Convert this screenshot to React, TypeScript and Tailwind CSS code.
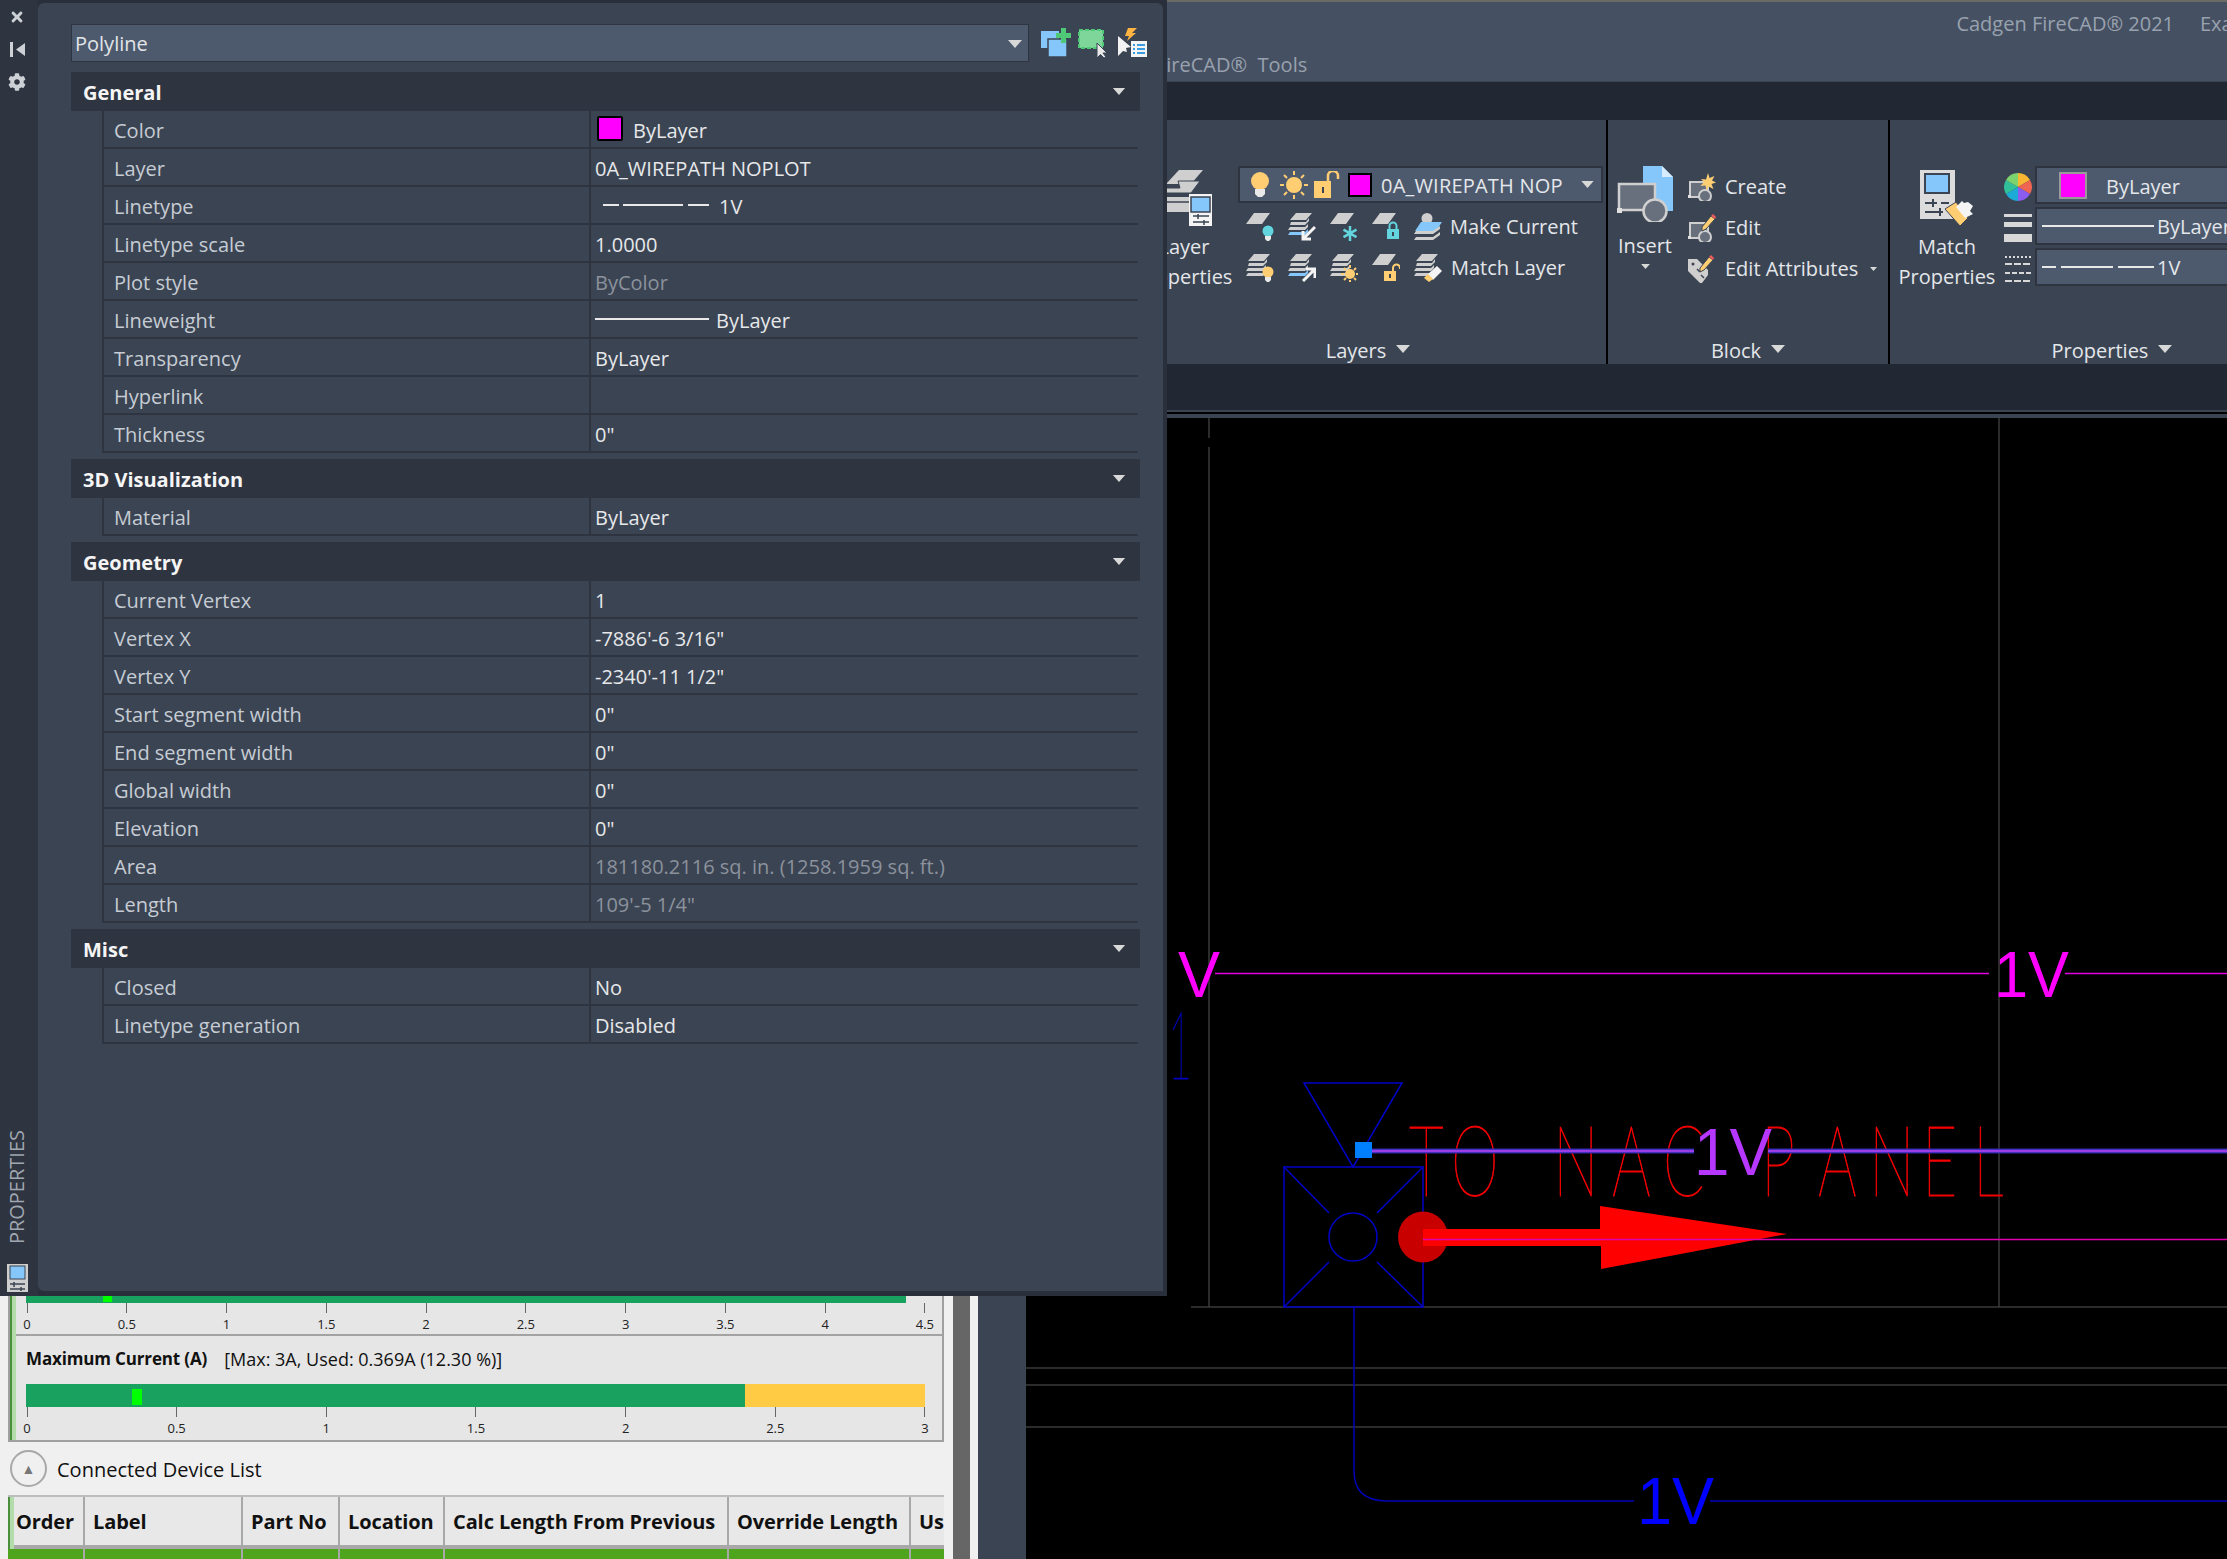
import type { ReactNode } from 'react';
import { FaCog, FaTimes } from 'react-icons/fa';

type Prop = { label: string; value?: ReactNode; muted?: boolean };
type Section = { title: string; rows: Prop[] };

const Swatch = ({ className = '' }: { className?: string }) => (
    <span className={`block bg-[#ff00ff] border-[2px] ${className}`} />
);

const DashLine = () => (
    <span className="flex items-center w-[114px] h-[3px] pl-[8px] -mt-[4px]">
        <span className="h-[2px] w-[16px] bg-[#e8e8e8]" />
        <span className="h-[2px] w-[60px] ml-[4px] bg-[#e8e8e8]" />
        <span className="h-[2px] w-[21px] ml-[5px] bg-[#e8e8e8]" />
    </span>
);

const sections: Section[] = [
    {
        title: 'General',
        rows: [
            {
                label: 'Color',
                value: (
                    <span className="flex items-center gap-[10px] ml-[2px]">
                        <Swatch className="w-[26px] h-[25px] -mt-[5px] border-black rounded-[2px]" />
                        ByLayer
                    </span>
                ),
            },
            { label: 'Layer', value: '0A_WIREPATH NOPLOT' },
            {
                label: 'Linetype',
                value: (
                    <span className="flex items-center gap-[10px]">
                        <DashLine />
                        1V
                    </span>
                ),
            },
            { label: 'Linetype scale', value: '1.0000' },
            { label: 'Plot style', value: 'ByColor', muted: true },
            {
                label: 'Lineweight',
                value: (
                    <span className="flex items-center gap-[7px]">
                        <span className="block w-[114px] h-[2px] -mt-[4px] bg-[#e8e8e8]" />
                        ByLayer
                    </span>
                ),
            },
            { label: 'Transparency', value: 'ByLayer' },
            { label: 'Hyperlink', value: '' },
            { label: 'Thickness', value: '0"' },
        ],
    },
    { title: '3D Visualization', rows: [{ label: 'Material', value: 'ByLayer' }] },
    {
        title: 'Geometry',
        rows: [
            { label: 'Current Vertex', value: '1' },
            { label: 'Vertex X', value: "-7886'-6 3/16\"" },
            { label: 'Vertex Y', value: "-2340'-11 1/2\"" },
            { label: 'Start segment width', value: '0"' },
            { label: 'End segment width', value: '0"' },
            { label: 'Global width', value: '0"' },
            { label: 'Elevation', value: '0"' },
            { label: 'Area', value: '181180.2116 sq. in. (1258.1959 sq. ft.)', muted: true },
            { label: 'Length', value: "109'-5 1/4\"", muted: true },
        ],
    },
    {
        title: 'Misc',
        rows: [
            { label: 'Closed', value: 'No' },
            { label: 'Linetype generation', value: 'Disabled' },
        ],
    },
];

const Caret = ({ className = '' }: { className?: string }) => (
    <svg viewBox="0 0 14 8" className={`block fill-[#d8d8d8] ${className}`}>
        <path d="M0 0h14L7 8z" />
    </svg>
);

const Icon = ({ size = 28, h, children }: { size?: number; h?: number; children: ReactNode }) => (
    <svg
        viewBox={`0 0 ${size} ${h ?? size}`}
        width={size}
        height={h ?? size}
        className="block shrink-0"
    >
        {children}
    </svg>
);

const Plate = ({ y = 0 }: { y?: number }) => <path d={`M8 ${y}h16l-8 11H0z`} fill="#cfcfcf" />;

const Stack = () => (
    <>
        <path d="M8 0h16l-6 7H2z" fill="#cfcfcf" />
        <path d="M3 9h15l3-4v3l-4 4H2z" fill="#cfcfcf" />
        <path d="M2 14h15l3-3v3l-3 3H0z" fill="#cfcfcf" />
        <path d="M2 19h15l3-3v3l-3 3H0z" fill="#cfcfcf" />
    </>
);

const BlueStack = () => (
    <>
        <path d="M8 0h16l-6 7H2z" fill="#cfcfcf" />
        <path d="M3 9h15l3-4v3l-4 4H2z" fill="#cfcfcf" />
        <path d="M2 14h15l3-3v3l-3 3H0z" fill="#cfcfcf" />
        <path d="M2 19h15l3-3v3l-3 3H0z" fill="#85c7fb" />
    </>
);

const Bulb = ({ c, x = 19, y = 14 }: { c: string; x?: number; y?: number }) => (
    <g>
        <circle cx={x} cy={y + 5} r="5.5" fill={c} />
        <path d={`M${x - 3} ${y + 10}h6v3l-2 2h-2l-2-2z`} fill="#eaeaea" />
    </g>
);

const Lock = ({ c, open, x = 14, y = 12 }: { c: string; open?: boolean; x?: number; y?: number }) => (
    <g>
        <rect x={x} y={y + 6} width="12" height="10" fill={c} />
        <path
            d={open ? `M${x + 9} ${y + 6}v-3a3.5 3.5 0 0 1 7 0v1` : `M${x + 2.5} ${y + 6}v-3a3.5 3.5 0 0 1 7 0v3`}
            fill="none"
            stroke={c}
            strokeWidth="2"
        />
        <rect x={x + 5} y={y + 9} width="2" height="4" fill="#3b4453" />
    </g>
);

const layerIconsTop = [
    <Icon key="a"><Plate /><Bulb c="#62d5de" x={22} y={13} /></Icon>,
    <Icon key="b">
        <BlueStack />
        <path d="M27 14L16 25M15 18v8h8" fill="none" stroke="#f4f4f4" strokeWidth="3" />
    </Icon>,
    <Icon key="c">
        <Plate />
        <g stroke="#62d5de" strokeWidth="2.500" fill="none">
            <path d="M20 13v15M13.500 16.700l13 7.500M13.500 24.200l13-7.500" />
        </g>
    </Icon>,
    <Icon key="d"><Plate /><Lock c="#62d5de" x={15} y={10} /></Icon>,
    <Icon key="e">
        <circle cx="13" cy="5.5" r="5.5" fill="#cfcfcf" />
        <path d="M7 9h21l-6 9H1z" fill="#85c7fb" />
        <path d="M2 18h17l7-5v3l-7 5H0z" fill="#cfcfcf" />
        <path d="M2 24h17l7-5v3l-7 5H0z" fill="#cfcfcf" />
    </Icon>,
];

const layerIconsBottom = [
    <Icon key="a"><Stack /><Bulb c="#ffce73" x={22} y={13} /></Icon>,
    <Icon key="b">
        <BlueStack />
        <path d="M15 27L26 16M18 15h9v9" fill="none" stroke="#f4f4f4" strokeWidth="3" />
    </Icon>,
    <Icon key="c">
        <Stack />
        <circle cx="20" cy="20" r="5" fill="#ffce73" />
        <path d="M20 11v3M20 26v3M11 20h3M26 20h3M14 14l2 2M24 24l2 2M14 26l2-2M24 16l2-2" stroke="#ffce73" strokeWidth="2" />
    </Icon>,
    <Icon key="d"><Plate /><Lock c="#ffce73" open x={12} y={11} /></Icon>,
    <Icon key="e">
        <Stack />
        <path d="M14 20l9-8 5 5-9 9z" fill="#f4f4f4" />
        <path d="M14 20l5 5-4 3-5-4z" fill="#ffce73" />
    </Icon>,
];

const InsertIcon = () => (
    <Icon size={56}>
        <path d="M26 0h19l11 11v34H26z" fill="#85c7fb" />
        <path d="M45 0l11 11H45z" fill="#d9ecfb" />
        <rect x="2" y="18" width="36" height="26" fill="#68707e" stroke="#cfcfcf" strokeWidth="2.5" />
        <rect x="0" y="42" width="5" height="5" fill="#e0e0e0" />
        <circle cx="38" cy="45" r="11.5" fill="#68707e" stroke="#cfcfcf" strokeWidth="2.5" />
    </Icon>
);

const BlockBase = () => (
    <>
        <rect x="2" y="9" width="18" height="15" fill="#68707e" stroke="#cfcfcf" strokeWidth="2" />
        <circle cx="17" cy="23" r="6" fill="#68707e" stroke="#cfcfcf" strokeWidth="2" />
        <rect x="0" y="22" width="3" height="3" fill="#e0e0e0" />
    </>
);

const Pencil = ({ x = 0, y = 0 }: { x?: number; y?: number }) => (
    <g transform={`translate(${x} ${y})`}>
        <path d="M0 13L9 2l4 3-9 10-4 2z" fill="#ffce73" stroke="#3b4453" />
        <path d="M9 2l2-2 3 3-1 2z" fill="#ef5b5b" />
    </g>
);

const blockRows: { label: string; icon: ReactNode; caret?: boolean }[] = [
    {
        label: 'Create',
        icon: (
            <Icon>
                <BlockBase />
                <path d="M20 0l1.5 5 5-2-2.500 4.500 4 2-4.500 1.500 2 5-5-2.500-2 4-1-5-5 .5 3.500-4-3-3 5 .5z" fill="#ffce73" />
            </Icon>
        ),
    },
    {
        label: 'Edit',
        icon: (
            <Icon>
                <BlockBase />
                <Pencil x={14} y={0} />
            </Icon>
        ),
    },
    {
        label: 'Edit Attributes',
        caret: true,
        icon: (
            <Icon>
                <path d="M0 4h9l11 11v5l-6 8h-2L0 16z" fill="#cfcfcf" />
                <circle cx="5" cy="9" r="1.500" fill="#3b4453" />
                <path d="M9 14l3 3M13 20l3 3" stroke="#3b4453" strokeWidth="1.500" />
                <Pencil x={12} y={0} />
            </Icon>
        ),
    },
];

const TopButtons = () => (
    <div className="flex items-center gap-[7px] ml-[12px]">
        <Icon size={30} h={30}>
            <rect x="0" y="3" width="18" height="17" fill="#85c7fb" />
            <rect x="7" y="11" width="19" height="18" fill="#85c7fb" stroke="#3b4453" strokeWidth="1.500" />
            <path d="M20 0h5v5h5v5h-5v5h-5v-5h-5V5h5z" fill="#4fc878" />
        </Icon>
        <Icon size={30} h={30}>
            <rect x="1" y="2" width="24" height="18" fill="#7fd69a" stroke="#4fc878" strokeWidth="2" strokeDasharray="4 2" />
            <path d="M19 15v15l3.500-3.500L26 30l2-1-3-4h4z" fill="#e8e8e8" stroke="#3b4453" />
        </Icon>
        <Icon size={32} h={30}>
            <path d="M13 0h9l-5 5h4L12 13l2-5h-4z" fill="#ffb340" />
            <path d="M3 8v20l5-5 4 1-1-4 5-1z" fill="#f2f2f2" />
            <rect x="16" y="13" width="16" height="16" fill="#f4f4f4" />
            <path d="M22 17h8M22 21h8M22 25h8M18 17h2M18 21h2M18 25h2" stroke="#3b9ce0" strokeWidth="2" />
        </Icon>
    </div>
);

const PropertyPalette = () => (
    <div className="absolute left-0 top-0 w-[1167px] h-[1296px] flex bg-[#2a303b]">
        <div className="w-[38px] shrink-0 flex flex-col items-center bg-[#2e3440]">
            <FaTimes className="mt-[9px] -ml-[4px] text-[16px] text-[#cdd1d6]" />
            <svg viewBox="0 0 15 15" className="w-[15px] h-[15px] mt-[17px] -ml-[4px] fill-[#cdd1d6]">
                <path d="M0 0h3v15H0zM15 1v13L6 7.500z" />
            </svg>
            <FaCog className="mt-[16px] -ml-[4px] text-[18px] text-[#cdd1d6]" />
            <span className="mt-auto [writing-mode:vertical-rl] rotate-180 text-[20px] leading-[20px] -ml-[4px] text-[#a0a7b0]">
                PROPERTIES
            </span>
            <svg viewBox="0 0 21 28" className="w-[21px] h-[28px] mt-[20px] mb-[4px] -ml-[4px]">
                <rect width="21" height="28" fill="#cfcfcf" />
                <rect x="3" y="2" width="15" height="13" fill="#85c7fb" stroke="#3b4453" />
                <path d="M3 20h15M3 25h15M7 18v5M14 23v4" stroke="#3b4453" strokeWidth="1.500" />
            </svg>
        </div>
        <div className="flex-1 min-w-0 rounded-t-[6px] rounded-bl-[6px] mt-[3px] mr-[4px] mb-[5px] bg-[#3b4453] pl-[33px] pr-[23px] pt-[21px]">
            <div className="flex items-center">
                <div className="flex items-center justify-between shrink-0 h-[38px] w-[958px] bg-[#4d5a6e] border border-[#2e3440] pl-[3px] pr-[5px] pt-[2px] text-[#e2e5e8]">
                    Polyline
                    <Caret className="w-[16px] h-[8px]" />
                </div>
                <TopButtons />
            </div>
            <div className="mt-[10px] flex flex-col gap-[6px]">
                {sections.map((section) => (
                    <div key={section.title}>
                        <div className="flex items-center justify-between h-[39px] bg-[#2e3440] pl-[12px] pr-[14px] font-bold text-[#f5f5f5]">
                            <span className="pt-[2px]">{section.title}</span>
                            <Caret className="w-[14px] h-[7px]" />
                        </div>
                        <div className="ml-[31px] mr-[2px]">
                            {section.rows.map((row) => (
                                <div key={row.label} className="flex h-[38px] border-b-[2px] border-[#2e3440]">
                                    <div className="w-[489px] border-l-[2px] border-r-[2px] border-[#2e3440] pl-[10px] pt-[4px] flex items-center text-[#c6ccd3]">
                                        {row.label}
                                    </div>
                                    <div
                                        className={`flex-1 pl-[4px] pt-[4px] flex items-center ${row.muted ? 'text-[#8b929c]' : 'text-[#e6e8ea]'}`}
                                    >
                                        {row.value}
                                    </div>
                                </div>
                            ))}
                        </div>
                    </div>
                ))}
            </div>
        </div>
    </div>
);

const PanelLabel = ({ children }: { children: string }) => (
    <div className="flex items-center justify-center gap-[10px] h-[26px] text-[#e4e7ea]">
        {children}
        <Caret className="w-[14px] h-[8px] mb-[4px]" />
    </div>
);

const Ribbon = () => (
    <div className="flex h-[244px] pl-[1130px] gap-[2px] text-[20px] leading-[26px] text-[#e4e7ea]">
        <section className="w-[476px] shrink-0 flex flex-col justify-between bg-[#3b4453] pt-[46px]">
            <div className="flex">
                <div className="w-[108px] flex flex-col items-center text-center leading-[30px]">
                    <div className="mt-[4px] ml-[10px] mb-[2px] h-[60px]">
                        <Icon size={46} h={56}>
                            <path d="M13 0h24L25 14H0z" fill="#cfcfcf" />
                            <path d="M12 11h22l-9 12H0v-5h14z" fill="#cfcfcf" stroke="#3b4453" />
                            <path d="M0 27h23v15H0z" fill="#cfcfcf" />
                            <path d="M0 32h23" stroke="#3b4453" strokeWidth="1.500" />
                            <rect x="23" y="24" width="23" height="32" fill="#f4f4f4" />
                            <rect x="25" y="27" width="19" height="15" fill="#85c7fb" stroke="#3b4453" strokeWidth="1.500" />
                            <path d="M27 46h16M27 52h16M32 44v5M38 50v5" stroke="#3b4453" strokeWidth="1.500" />
                        </Icon>
                    </div>
                    <span>Layer</span>
                    <span>Properties</span>
                </div>
                <div className="w-[365px]">
                    <div className="flex items-center h-[37px] bg-[#4d5a6e] border-[2px] border-[#2e3440] pl-[10px] pr-[4px]">
                        <Icon size={20} h={26}>
                            <circle cx="10" cy="9" r="9" fill="#ffce73" />
                            <path d="M5 17h10v5l-3 3H8l-3-3z" fill="#eaeaea" />
                        </Icon>
                        <div className="ml-[10px]">
                            <Icon size={28}>
                                <circle cx="14" cy="14" r="8" fill="#ffce73" />
                                <path d="M14 0v4M14 24v4M0 14h4M24 14h4M4 4l3 3M21 21l3 3M4 24l3-3M21 7l3-3" stroke="#ffce73" strokeWidth="2" />
                            </Icon>
                        </div>
                        <div className="ml-[6px]">
                            <Icon size={26} h={28}>
                                <rect x="0" y="10" width="17" height="17" fill="#ffce73" />
                                <path d="M14 10V5a5 5 0 0 1 10 0v3" fill="none" stroke="#ffce73" strokeWidth="2.500" />
                                <rect x="8" y="16" width="2" height="6" fill="#3b4453" />
                            </Icon>
                        </div>
                        <Swatch className="ml-[8px] w-[24px] h-[24px] border-black" />
                        <span className="ml-[9px] pt-[2px] tracking-[0.2px]">0A_WIREPATH NOP</span>
                        <Caret className="ml-auto mr-[3px] w-[13px] h-[7px]" />
                    </div>
                    <div className="mt-[10px] flex items-center gap-[14px] pl-[8px] h-[28px]">
                        {layerIconsTop}
                        <span className="-ml-[6px]">Make Current</span>
                    </div>
                    <div className="mt-[13px] flex items-center gap-[14px] pl-[8px] h-[28px]">
                        {layerIconsBottom}
                        <span className="-ml-[5px]">Match Layer</span>
                    </div>
                </div>
            </div>
            <PanelLabel>Layers</PanelLabel>
        </section>
        <section className="w-[280px] shrink-0 flex flex-col justify-between bg-[#3b4453] pt-[46px]">
            <div className="flex">
                <div className="w-[74px] flex flex-col items-center">
                    <InsertIcon />
                    <span className="mt-[11px]">Insert</span>
                    <Caret className="mt-[5px] w-[9px] h-[5px]" />
                </div>
                <div className="ml-[6px] flex flex-col">
                    {blockRows.map((row) => (
                        <div key={row.label} className="flex items-center gap-[9px] h-[41px]">
                            {row.icon}
                            {row.label}
                            {row.caret && <Caret className="ml-[3px] w-[7px] h-[4px]" />}
                        </div>
                    ))}
                </div>
            </div>
            <PanelLabel>Block</PanelLabel>
        </section>
        <section className="w-[444px] shrink-0 flex flex-col justify-between bg-[#3b4453] pt-[46px]">
            <div className="flex">
                <div className="w-[114px] flex flex-col items-center leading-[30px] pt-[4px]">
                    <Icon size={54} h={56}>
                        <rect x="0" y="0" width="35" height="49" fill="#dcdcdc" />
                        <rect x="5" y="4" width="24" height="19" fill="#85c7fb" stroke="#3b4453" strokeWidth="2" />
                        <path d="M5 33h12M21 33h8M5 42h18M13 29v8M20 38v8" stroke="#3b4453" strokeWidth="2" />
                        <path d="M25 39L36 32 48 48 40 56z" fill="#ffce73" stroke="#3b4453" />
                        <path d="M36 37l6-6 2 2 4-1 5 4-3 5 3 3-8 4z" fill="#f4f4f4" />
                    </Icon>
                    <span className="mt-[6px]">Match</span>
                    <span>Properties</span>
                </div>
                <div className="flex flex-col">
                    <div className="h-[41px] flex items-center">
                        <Icon size={28}>
                            <path d="M14 14L14 0a14 14 0 0 1 12 7z" fill="#f8b632" />
                            <path d="M14 14L26 7a14 14 0 0 1 0 14z" fill="#ee6552" />
                            <path d="M14 14L26 21a14 14 0 0 1-12 7z" fill="#8a5cf0" />
                            <path d="M14 14L14 28a14 14 0 0 1-12-7z" fill="#1cabd6" />
                            <path d="M14 14L2 21a14 14 0 0 1 0-14z" fill="#31c19a" />
                            <path d="M14 14L2 7a14 14 0 0 1 12-7z" fill="#7dd36e" />
                        </Icon>
                    </div>
                    <div className="h-[41px] flex items-center">
                        <Icon size={28}>
                            <rect y="0" width="28" height="3" fill="#d8d8d8" />
                            <rect y="8" width="28" height="5" fill="#d8d8d8" />
                            <rect y="20" width="28" height="8" fill="#d8d8d8" />
                        </Icon>
                    </div>
                    <div className="h-[41px] flex items-center">
                        <Icon size={28} h={26}>
                            <path d="M1 1h26" stroke="#d8d8d8" strokeWidth="2" strokeDasharray="2 2" />
                            <path d="M1 8h26" stroke="#d8d8d8" strokeWidth="2" strokeDasharray="7 2" />
                            <path d="M1 17h26" stroke="#d8d8d8" strokeWidth="2" strokeDasharray="5 2" />
                            <path d="M1 25h26" stroke="#d8d8d8" strokeWidth="2" strokeDasharray="7 2" />
                        </Icon>
                    </div>
                </div>
                <div className="ml-[3px] flex flex-1 flex-col gap-[3px]">
                    <div className="flex items-center h-[38px] bg-[#4d5a6e] border-[2px] border-[#2e3440] pl-[22px]">
                        <Swatch className="w-[28px] h-[27px] border-[#9a9a9a]" />
                        <span className="ml-[19px] pt-[3px]">ByLayer</span>
                    </div>
                    <div className="flex items-center gap-[3px] h-[38px] bg-[#4d5a6e] border-[2px] border-[#2e3440] pl-[5px]">
                        <span className="block w-[112px] h-[2px] bg-[#e8e8e8]" />
                        <span className="pt-[2px]">ByLayer</span>
                    </div>
                    <div className="flex items-center gap-[3px] h-[38px] bg-[#4d5a6e] border-[2px] border-[#2e3440] pl-[5px]">
                        <span className="flex items-center gap-[5px] w-[112px]">
                            <span className="h-[2px] w-[14px] bg-[#e8e8e8]" />
                            <span className="h-[2px] w-[52px] bg-[#e8e8e8]" />
                            <span className="h-[2px] w-[36px] bg-[#e8e8e8]" />
                        </span>
                        <span className="pt-[2px]">1V</span>
                    </div>
                </div>
            </div>
            <PanelLabel>Properties</PanelLabel>
        </section>
    </div>
);

const Ticks = ({ labels }: { labels: string[] }) => (
    <div className="flex justify-between w-[898px] ml-[17px] text-[13px] text-[#222]">
        {labels.map((label) => (
            <div key={label} className="w-0 flex flex-col items-center">
                <span className="block w-[1px] h-[10px] bg-[#666] shrink-0" />
                <span className="mt-[3px] whitespace-nowrap leading-[16px]">{label}</span>
            </div>
        ))}
    </div>
);

const deviceColumns = [
    { name: 'Order', w: 'w-[77px]' },
    { name: 'Label', w: 'w-[158px]' },
    { name: 'Part No', w: 'w-[97px]' },
    { name: 'Location', w: 'w-[105px]' },
    { name: 'Calc Length From Previous', w: 'w-[284px]' },
    { name: 'Override Length', w: 'w-[182px]' },
    { name: 'Us', w: 'flex-1' },
];

const DevicePane = () => (
    <div className="w-[1026px] h-[263px] flex text-[#111]">
        <div className="w-[953px] bg-[#f0f0f0] pl-[8px] pr-[9px]">
            <div className="relative border-x-[2px] border-b-[2px] border-[#a0a0a0] bg-[#e6e6e6]">
                <div className="absolute left-0 top-0 bottom-0 w-[6px] border-l-[2px] border-[#4a8f3c] bg-[#b4dcaa]" />
                <div className="h-[40px] border-b-[2px] border-[#a3a3a3]">
                    <div className="relative h-[7px] w-[880px] ml-[16px] bg-[#19a160]">
                        <span className="absolute left-[77px] top-0 w-[9px] h-[6px] bg-[#00ff00]" />
                    </div>
                    <Ticks labels={['0', '0.5', '1', '1.5', '2', '2.5', '3', '3.5', '4', '4.5']} />
                </div>
                <div className="mt-[11px] ml-[16px] flex items-center h-[24px] whitespace-nowrap">
                    <span className="text-[17px] font-bold tracking-[-0.15px]">Maximum Current (A)</span>
                    <span className="ml-[17px] text-[18px]">[Max: 3A, Used: 0.369A (12.30 %)]</span>
                </div>
                <div className="relative flex mt-[13px] ml-[16px] w-[899px] h-[23px]">
                    <div className="w-[719px] bg-[#19a160]" />
                    <div className="flex-1 bg-[#ffcb45]" />
                    <span className="absolute left-[106px] top-[5px] w-[10px] h-[16px] bg-[#00ff00]" />
                </div>
                <div className="pb-[4px]">
                    <Ticks labels={['0', '0.5', '1', '1.5', '2', '2.5', '3']} />
                </div>
            </div>
            <div className="flex items-center h-[53px] pl-[2px] text-[20px]">
                <span className="flex items-center justify-center w-[37px] h-[37px] rounded-full border-[2px] border-[#a8a8a8] text-[14px] text-[#777]">
                    ▲
                </span>
                <span className="ml-[10px] pt-[2px]">Connected Device List</span>
            </div>
            <div className="relative border-t-[2px] border-[#bdbdbd]">
                <div className="absolute left-0 top-0 w-[6px] h-[52px] border-l-[2px] border-[#4a8f3c] bg-[#b4dcaa]" />
                <div className="flex h-[52px] bg-[#e8e8e8] border-b-[4px] border-[#a8a8a8] text-[20px] font-bold tracking-[-0.1px]">
                    {deviceColumns.map((col) => (
                        <div
                            key={col.name}
                            className={`${col.w} flex items-center pl-[8px] pt-[2px] overflow-hidden whitespace-nowrap border-r-[2px] border-[#a8a8a8] last:border-r-0`}
                        >
                            {col.name}
                        </div>
                    ))}
                </div>
                <div className="flex h-[12px] bg-[#4fa41e]">
                    {deviceColumns.map((col) => (
                        <div key={col.name} className={`${col.w} border-r-[2px] border-[#a8a8a8] last:border-r-0`} />
                    ))}
                </div>
            </div>
        </div>
        <div className="w-[17px] bg-[#666666]" />
        <div className="w-[8px] bg-[#f0f0f0]" />
        <div className="flex-1 bg-[#3b4453]" />
    </div>
);

// per-glyph starts of the CAD label, measured off the drawing
const NARROW = 0.62;
const panelLabelXs = [1409, 1451, 1500, 1553, 1612, 1663, 1720, 1761, 1818, 1869, 1922, 1973]
    .map((x) => (x / NARROW).toFixed(1))
    .join(' ');

const Drawing = () => (
    <svg viewBox="1026 418 1201 1141" width="1201" height="1141" className="block shrink-0 bg-black font-['Liberation_Sans',sans-serif]">
        <g stroke="#3a3a3a" strokeWidth="1.500" fill="none">
            <path d="M1209 418V438M1209 447V1307M1999 418V1307M1191 1307H2227" />
            <path d="M1026 1368H2227M1026 1385H2227M1026 1427H2227" />
        </g>
        <path d="M1215 973.500H1989M2065 973.500H2227" stroke="#e000e0" strokeWidth="1.500" />
        <text x="1178" y="997" fontSize="65" textLength="42" lengthAdjust="spacingAndGlyphs" fill="#ff00ff">V</text>
        <text x="1994" y="997" fontSize="65" textLength="75" lengthAdjust="spacingAndGlyphs" fill="#ff00ff">1V</text>
        <text x="1168" y="1079" fontSize="95" fontWeight="100" textLength="24" lengthAdjust="spacingAndGlyphs" fill="#0000b0" stroke="#0000c0" strokeWidth="0.8" className="font-['Lato',sans-serif]">1</text>
        <text x={panelLabelXs} y="1196" transform={`scale(${NARROW} 1)`} fontSize="98" fontWeight="100" fill="#ff0000" stroke="#f00000" strokeWidth="1" className="font-['Lato',sans-serif]">TO NAC PANEL</text>
        <path d="M1372 1151H1694M1768 1151H2227" stroke="#2a2ab0" strokeWidth="5" />
        <path d="M1372 1151H1694M1768 1151H2227" stroke="#9a3fe8" strokeWidth="2.500" />
        <text x="1694" y="1175" fontSize="66" textLength="78" lengthAdjust="spacingAndGlyphs" fill="#b637ff">1V</text>
        <g stroke="#0000c8" strokeWidth="1.500" fill="none">
            <path d="M1304 1083H1402L1353 1167Z" />
            <rect x="1284" y="1167" width="139" height="140" />
            <circle cx="1353" cy="1237" r="24" />
            <path d="M1284 1167L1329 1213M1423 1167L1377 1213M1284 1307L1329 1262M1423 1307L1377 1262" />
        </g>
        <rect x="1355" y="1142" width="17" height="16" fill="#0080ff" />
        <ellipse cx="1423" cy="1237" rx="25" ry="25.500" fill="#c80000" />
        <path d="M1423 1229H1600V1206L1787 1234L1601 1269V1246H1423Z" fill="#ff0000" />
        <path d="M1423 1239.500H2227" stroke="#e000b0" strokeWidth="1.500" />
        <path d="M1354 1307V1471Q1354 1501 1387 1501H1634M1710 1501H2227" stroke="#0000b8" strokeWidth="1.500" fill="none" />
        <text x="1637" y="1524" fontSize="66" textLength="77" lengthAdjust="spacingAndGlyphs" fill="#0000ff">1V</text>
    </svg>
);

export default function App() {
    return (
        <div className="relative w-[2227px] h-[1559px] overflow-hidden flex flex-col bg-black font-['Open_Sans',sans-serif] text-[20px]">
            <header className="h-[82px] shrink-0 bg-[#465063] border-t-[2px] border-[#6b6a63] border-b-[1px] border-b-[#3b4453] text-[#98a2ae]">
                <div className="flex justify-end h-[44px] items-center whitespace-nowrap">
                    <span>Cadgen FireCAD® 2021</span>
                    <span className="ml-[26px] w-[27px] overflow-hidden">Exa</span>
                </div>
                <div className="pl-[1156px] leading-[38px] whitespace-nowrap">FireCAD®&nbsp; Tools</div>
            </header>
            <div className="h-[38px] shrink-0 bg-[#222833]" />
            <Ribbon />
            <div className="h-[46px] shrink-0 bg-[#222833]" />
            <div className="h-[2px] shrink-0 bg-[#3b4453]" />
            <div className="h-[2px] shrink-0 bg-black" />
            <div className="h-[4px] shrink-0 bg-[#3b4453]" />
            <main className="flex flex-1">
                <div className="w-[1026px] flex flex-col justify-end bg-[#3b4453]">
                    <DevicePane />
                </div>
                <Drawing />
            </main>
            <PropertyPalette />
        </div>
    );
}
